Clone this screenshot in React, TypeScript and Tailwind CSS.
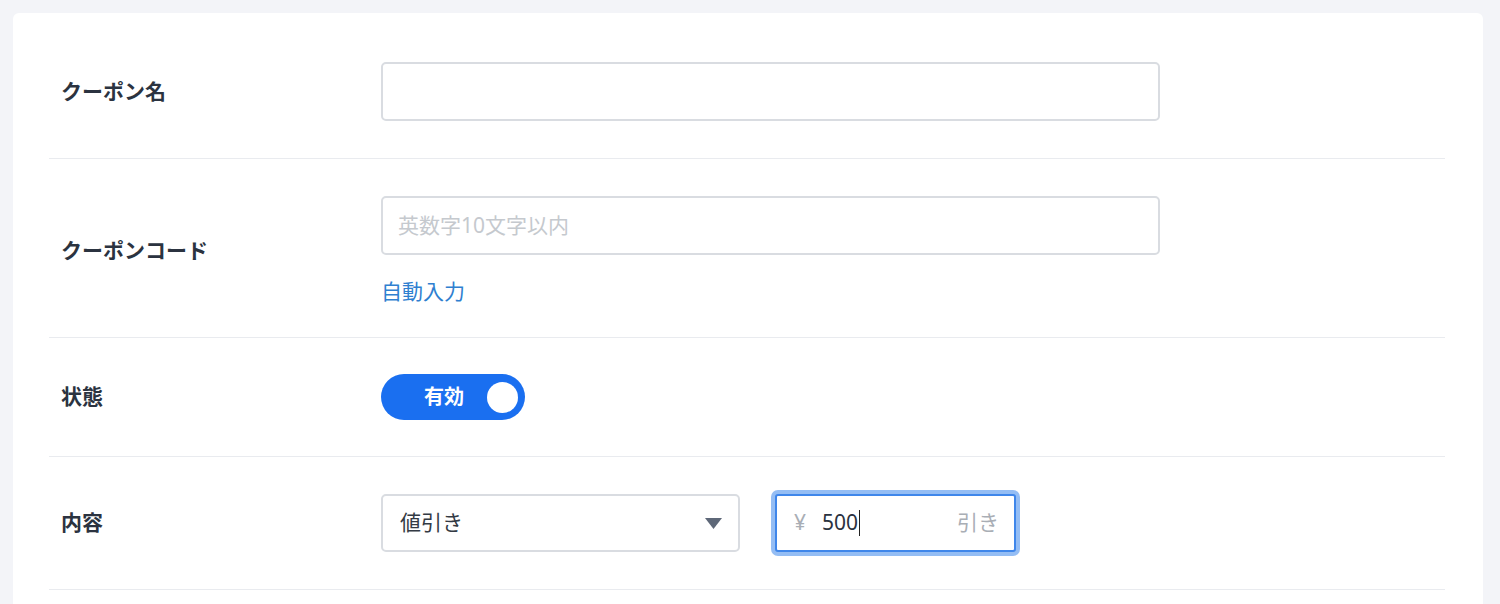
import { useState } from "react";

const font = { fontFamily: '"Noto Sans", "Noto Sans CJK JP", sans-serif' };

function Row({
  label,
  children,
  className = "py-[37px]",
}: {
  label: string;
  children: React.ReactNode;
  className?: string;
}) {
  return (
    <div className={`flex items-center border-b border-[#e9ebef] ${className}`}>
      <div className="w-[332px] shrink-0 pl-3 text-[21px] font-bold text-[#2b3340]">
        {label}
      </div>
      <div className="flex-1">{children}</div>
    </div>
  );
}

export default function App() {
  const [enabled, setEnabled] = useState(true);

  return (
    <div className="min-h-screen bg-[#f3f4f8] pt-[13px] pl-[13px]" style={font}>
      <div className="w-[1470px] rounded-md bg-white pl-9 pr-[38px] pt-3">
        <Row label="クーポン名">
          <div className="h-[59px] w-[779px] rounded-[5px] border-2 border-[#d9dce1] bg-white" />
        </Row>

        <Row label="クーポンコード" className="pt-[37px] pb-[32px]">
          <div className="flex h-[59px] w-[779px] items-center rounded-[5px] border-2 border-[#d9dce1] bg-white px-[15px] text-[21px] text-[#c5c9ce]">
            英数字10文字以内
          </div>
          <button
            type="button"
            className="mt-[22px] block text-[21px] leading-[28px] text-[#2f7fd0]"
          >
            自動入力
          </button>
        </Row>

        <Row label="状態" className="py-[36px]">
          <button
            type="button"
            onClick={() => setEnabled(!enabled)}
            className="flex h-[46px] w-[144px] items-center justify-between rounded-full bg-[#1a6ff0] pl-[43px] pr-[7px] text-white"
          >
            <span className="text-[20px] font-bold">{enabled ? "有効" : "無効"}</span>
            <span className="h-[31px] w-[31px] rounded-full bg-white" />
          </button>
        </Row>

        <Row label="内容" className="pt-[37px] pb-[37px]">
          <div className="flex items-center gap-[35px]">
            <div className="flex h-[58px] w-[359px] items-center justify-between rounded-[5px] border-2 border-[#d9dce1] bg-white pl-[17px] pr-4 text-[21px] text-[#333a44]">
              <span>値引き</span>
              <svg width="17" height="11" viewBox="0 0 17 11">
                <path d="M0 0h17L8.5 11z" fill="#5e6878" />
              </svg>
            </div>
            <div className="flex h-[58px] w-[241px] items-center rounded-[3px] border-2 border-[#3f86ea] bg-white pl-[17px] pr-[15px] text-[21px] ring-4 ring-[#94bdf4]">
              <span className="text-[#a9aeb5]">¥</span>
              <span className="ml-[16px] text-[#2b3340]">500</span>
              <span className="ml-px h-[26px] w-px bg-[#222]" />
              <span className="ml-auto text-[#a9aeb5]">引き</span>
            </div>
          </div>
        </Row>
        <div className="h-6" />
      </div>
    </div>
  );
}
